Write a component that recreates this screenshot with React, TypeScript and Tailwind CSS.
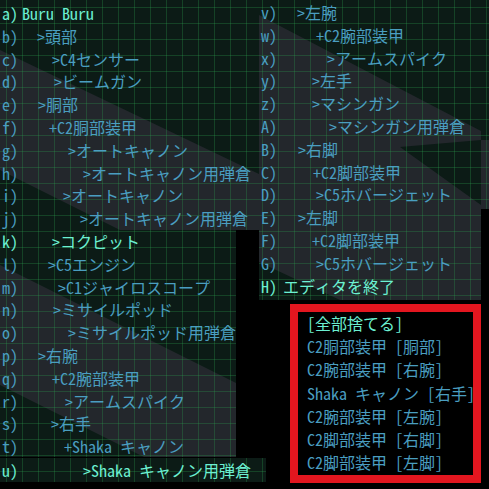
import React from "react";

type Row = { l: string; t: string; w: string; b?: boolean };

const NORMAL = "text-[#4a9ec0]";
const BRIGHT = "text-[#6cf0d2]";

const left1: Row[] = [
  { l: "a)", t: "Buru Buru", w: "w-[20px]", b: true },
  { l: "b)", t: ">頭部", w: "w-[35px]" },
  { l: "c)", t: ">C4センサー", w: "w-[50px]" },
  { l: "d)", t: ">ビームガン", w: "w-[52px]" },
  { l: "e)", t: ">胴部", w: "w-[36px]" },
  { l: "f)", t: "+C2胴部装甲", w: "w-[47px]" },
  { l: "g)", t: ">オートキャノン", w: "w-[66px]" },
  { l: "h)", t: ">オートキャノン用弾倉", w: "w-[81px]" },
  { l: "i)", t: ">オートキャノン", w: "w-[61px]" },
  { l: "j)", t: ">オートキャノン用弾倉", w: "w-[78px]" },
];

const left2: Row[] = [
  { l: "k)", t: ">コクピット", w: "w-[50px]", b: true },
  { l: "l)", t: ">C5エンジン", w: "w-[46px]" },
  { l: "m)", t: ">C1ジャイロスコープ", w: "w-[56px]" },
  { l: "n)", t: ">ミサイルポッド", w: "w-[51px]" },
  { l: "o)", t: ">ミサイルポッド用弾倉", w: "w-[66px]" },
  { l: "p)", t: ">右腕", w: "w-[36px]" },
  { l: "q)", t: "+C2腕部装甲", w: "w-[50px]" },
  { l: "r)", t: ">アームスパイク", w: "w-[63px]" },
  { l: "s)", t: ">右手", w: "w-[49px]" },
  { l: "t)", t: "+Shaka キャノン", w: "w-[62px]" },
];

const right: Row[] = [
  { l: "v)", t: ">左腕", w: "w-[36px]" },
  { l: "w)", t: "+C2腕部装甲", w: "w-[55px]" },
  { l: "x)", t: ">アームスパイク", w: "w-[66px]" },
  { l: "y)", t: ">左手", w: "w-[51px]" },
  { l: "z)", t: ">マシンガン", w: "w-[51px]" },
  { l: "A)", t: ">マシンガン用弾倉", w: "w-[68px]" },
  { l: "B)", t: ">右脚", w: "w-[37px]" },
  { l: "C)", t: "+C2脚部装甲", w: "w-[52px]" },
  { l: "D)", t: ">C5ホバージェット", w: "w-[55px]" },
  { l: "E)", t: ">左脚", w: "w-[37px]" },
  { l: "F)", t: "+C2脚部装甲", w: "w-[51px]" },
  { l: "G)", t: ">C5ホバージェット", w: "w-[55px]" },
  { l: "H)", t: "エディタを終了", w: "w-[22px]", b: true },
];

const boxLines = [
  "[全部捨てる]",
  "C2胴部装甲 [胴部]",
  "C2腕部装甲 [右腕]",
  "Shaka キャノン [右手]",
  "C2腕部装甲 [左腕]",
  "C2脚部装甲 [右脚]",
  "C2脚部装甲 [左脚]",
];

function mod(a: number, n: number) {
  return ((a % n) + n) % n;
}

function Scene({
  w,
  h,
  ox,
  oy,
  polys,
  base = "#0c1b16",
}: {
  w: number;
  h: number;
  ox: number;
  oy: number;
  polys: number[][][];
  base?: string;
}) {
  const id = `grid_${ox}_${oy}`;
  const px = mod(6 - ox, 16);
  const py = mod(7 - oy, 16);
  return (
    <svg className="absolute inset-0" width={w} height={h} viewBox={`0 0 ${w} ${h}`}>
      <defs>
        <pattern id={id} width="16" height="16" patternUnits="userSpaceOnUse" x={px} y={py}>
          <path d="M0 0.5H16M0.5 0V16" stroke="#2c9c4c" strokeOpacity="0.3" strokeWidth="1" fill="none" />
        </pattern>
      </defs>
      <rect width={w} height={h} fill={base} />
      {polys.map((p, i) => (
        <polygon
          key={i}
          points={p.map(([x, y]) => `${x - ox},${y - oy}`).join(" ")}
          fill="#23272c"
        />
      ))}
      <rect width={w} height={h} fill={`url(#${id})`} />
    </svg>
  );
}

function Line({ r }: { r: Row }) {
  return (
    <div className={`flex h-[22.8px] leading-[22.8px] whitespace-pre ${r.b ? BRIGHT : NORMAL}`}>
      <span className={`${r.w} shrink-0`}>{r.l}</span>
      <span>{r.t}</span>
    </div>
  );
}

export default function App() {
  return (
    <div className="w-[489px] h-[489px] bg-black overflow-hidden flex font-['Noto_Sans_Mono_CJK_JP','Noto_Sans_CJK_JP','DejaVu_Sans_Mono',monospace] text-[16px]">
      {/* left column */}
      <div className="w-[259px] shrink-0 flex flex-col">
        <div className="relative w-[259px] h-[230px]">
          <Scene
            w={259}
            h={230}
            ox={0}
            oy={0}
            polys={[[[0, 50], [259, 174], [259, 230], [120, 230], [0, 170]]]}
          />
          <div className="relative pl-[2px] pt-[2px]">
            {left1.map((r) => (
              <Line key={r.l} r={r} />
            ))}
          </div>
        </div>
        <div className="relative w-[236px] h-[227px]">
          <Scene
            w={236}
            h={227}
            ox={0}
            oy={230}
            polys={[[[0, 265], [236, 383], [236, 457], [144, 457], [0, 385]]]}
          />
          <div className="relative pl-[2px]">
            {left2.map((r) => (
              <Line key={r.l} r={r} />
            ))}
          </div>
        </div>
        <div className="relative w-[266px] h-[24px] mt-[1px]">
          <Scene w={266} h={24} ox={0} oy={458} polys={[]} />
          <div className="relative pl-[2px] pt-[1px]">
            <Line r={{ l: "u)", t: ">Shaka キャノン用弾倉", w: "w-[81px]", b: true }} />
          </div>
        </div>
      </div>

      {/* right column */}
      <div className="w-[230px] shrink-0 flex flex-col">
        <div className="flex items-start">
          <div className="relative w-[222px] h-[300px]">
            <Scene
              w={222}
              h={300}
              ox={259}
              oy={0}
              polys={[
                [[259, 15], [481, 131], [481, 140], [400, 147], [481, 205], [481, 300], [340, 300], [259, 262]],
              ]}
            />
            <div className="relative pl-[2px] pt-[1px]">
              {right.map((r) => (
                <Line key={r.l} r={r} />
              ))}
            </div>
          </div>
          <div className="relative w-[8px] h-[209px]">
            <Scene w={8} h={209} ox={481} oy={0} polys={[[[481, 140], [489, 140], [489, 209], [481, 209]]]} />
          </div>
        </div>
        <div className="ml-[31px] mt-[4px] w-[191px] h-[179px] border-[8px] border-[#e3161f] bg-black pl-[9px]">
          {boxLines.map((t, i) => (
            <div
              key={i}
              className={`h-[23.2px] leading-[23.2px] whitespace-pre ${i === 0 ? BRIGHT : NORMAL}`}
            >
              {t}
            </div>
          ))}
        </div>
      </div>
    </div>
  );
}
